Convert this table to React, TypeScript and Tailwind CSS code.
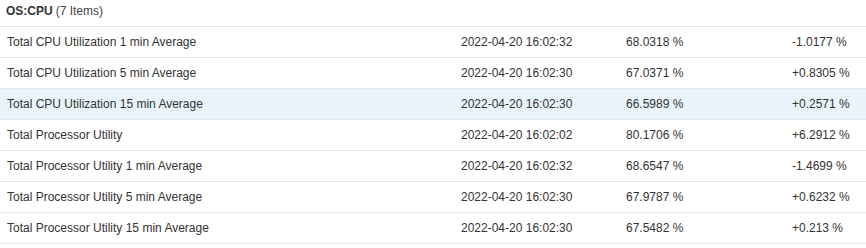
import React from "react";

const rows = [
  { name: "Total CPU Utilization 1 min Average", date: "2022-04-20 16:02:32", value: "68.0318 %", change: "-1.0177 %" },
  { name: "Total CPU Utilization 5 min Average", date: "2022-04-20 16:02:30", value: "67.0371 %", change: "+0.8305 %" },
  { name: "Total CPU Utilization 15 min Average", date: "2022-04-20 16:02:30", value: "66.5989 %", change: "+0.2571 %", hl: true },
  { name: "Total Processor Utility", date: "2022-04-20 16:02:02", value: "80.1706 %", change: "+6.2912 %" },
  { name: "Total Processor Utility 1 min Average", date: "2022-04-20 16:02:32", value: "68.6547 %", change: "-1.4699 %" },
  { name: "Total Processor Utility 5 min Average", date: "2022-04-20 16:02:30", value: "67.9787 %", change: "+0.6232 %" },
  { name: "Total Processor Utility 15 min Average", date: "2022-04-20 16:02:30", value: "67.5482 %", change: "+0.213 %" },
];

export default function App() {
  return (
    <div
      className="w-[866px] h-[248px] bg-white text-[12px] text-[#333333]"
      style={{ fontFamily: '"Liberation Sans", Arial, sans-serif' }}
    >
      <div className="h-[27px] flex items-center pl-[6px] pb-[4px] border-b border-[#e6e6e6]">
        <span className="font-bold">OS:CPU</span>
        <span className="ml-[3px] text-[#444]">(7 Items)</span>
      </div>
      {rows.map((r) => (
        <div
          key={r.name}
          className={`h-[31px] flex items-center pl-[7px] border-b border-[#e6e6e6] ${r.hl ? "bg-[#e8f3fc]" : ""}`}
        >
          <div className="w-[454px]">{r.name}</div>
          <div className="w-[165px]">{r.date}</div>
          <div className="w-[166px]">{r.value}</div>
          <div className="flex-1">{r.change}</div>
        </div>
      ))}
    </div>
  );
}
